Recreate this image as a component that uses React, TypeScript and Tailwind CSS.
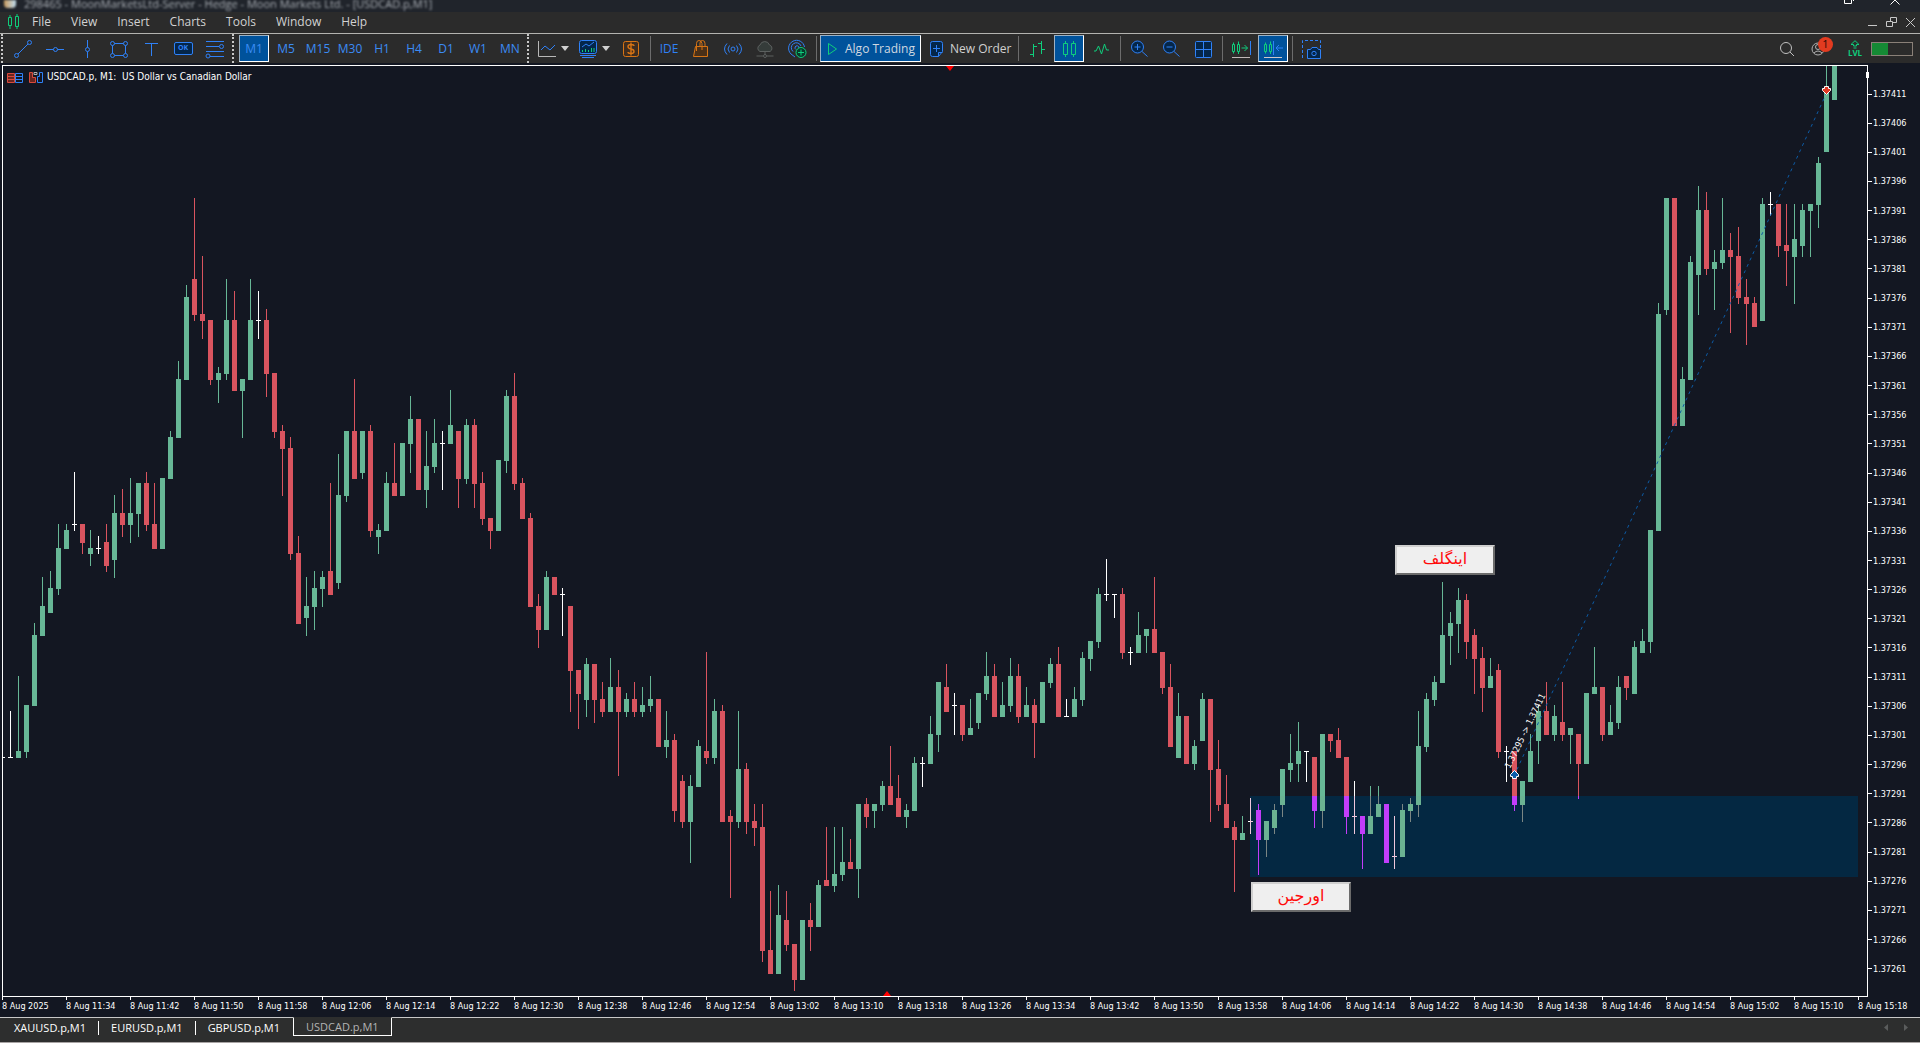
import type { ReactNode } from "react";
import { useState } from "react";
import clsx from "clsx";

// One candle per entry: kind, high, body top, body bottom, low (points above 1.37000).
// G = bullish, R = bearish, W = doji.
const CANDLES = `
W305,297,297,297 G311,298,297,297 G306,306,298,297 G320,318,306,306 G328,323,318,318 G329,326,322,322
G337,333,326,325 G337,336,333,333 W346,337,337,336 R337,337,334,332 G336,333,332,330 W335,333,333,332
R337,334,330,329 G342,339,331,328 R343,339,337,335 G345,339,337,334 G344,344,339,335 R346,344,337,336
R344,337,333,333 G345,345,333,333 G353,352,345,345 G365,362,352,352 G378,376,362,362 R393,379,373,372
R383,373,372,369 R372,372,362,361 G364,363,362,358 G379,372,363,362 R377,372,360,360 G362,362,360,352
G379,372,362,362 W377,372,372,369 R374,372,363,359 R363,363,353,352 R354,353,350,342 R352,350,332,331
R335,332,320,320 G328,323,321,318 G329,326,323,319 G329,328,326,323 R344,329,325,325 G349,342,327,326
G353,353,342,341 R362,353,345,345 G353,353,346,345 R354,353,336,335 G337,336,335,332 G346,344,336,336
R351,344,342,342 G351,351,342,342 G359,355,351,346 R355,355,343,343 G353,347,343,340 G355,351,347,346
W353,351,351,343 G360,354,351,351 R353,353,345,340 G355,354,345,344 R355,354,344,340 R346,344,338,337
R338,338,336,333 G348,348,336,336 G360,359,348,346 R363,359,344,343 R345,344,338,338 R339,338,323,323
R325,323,319,316 G329,328,319,319 R328,328,325,325 W326,325,325,318 R323,323,312,305 R312,312,308,302
G314,313,307,304 R313,313,307,303 R310,307,305,304 G314,309,305,305 R312,309,305,294 G308,307,305,304
R310,307,305,304 G309,306,305,304 G311,307,306,305 R307,307,299,299 G305,300,299,297 R301,300,288,286
R294,293,286,285 G294,292,286,279 G300,299,292,292 R315,298,297,296 G307,305,297,296 R306,305,286,286
R288,287,286,273 G305,295,286,285 R296,295,286,284 R289,286,285,282 R289,285,264,262 R274,264,260,260
G275,270,260,260 R274,269,265,264 R265,265,259,257 G269,269,259,259 R272,269,268,264 G276,275,268,268
R285,276,275,275 G285,277,275,274 G285,279,277,276 R283,279,278,278 G289,289,278,273 R290,289,287,285
G289,289,288,285 G293,292,289,288 R299,292,289,289 R294,290,287,287 G289,288,287,285 G297,296,288,288
W297,296,296,292 G304,301,296,296 G310,310,301,298 R313,309,305,305 W308,306,306,301 R306,306,301,300
G307,302,301,301 G308,308,303,302 G315,311,308,307 R313,311,304,304 G310,306,304,304 G314,311,306,305
R313,311,304,303 G309,306,304,304 R307,306,303,297 G310,310,303,303 G314,313,310,309 R316,313,304,304
W307,304,304,304 G309,307,304,304 G315,314,307,306 G317,317,314,312 G326,325,317,316 W331,325,325,324
W325,325,325,321 R326,325,315,314 W316,315,315,313 G322,318,315,315 G319,319,318,315 R328,319,315,315
R315,315,309,308 R313,309,299,299 G308,304,297,297 R304,304,296,296 G300,299,296,295 G308,307,300,300
R307,307,295,286 R300,295,289,288 R294,289,285,285 R286,285,283,274 G287,284,283,283 W290,286,286,284
R289,288,283,277 G286,286,283,280 G289,288,285,284 G295,295,289,287 G301,296,295,293 G303,298,296,293
W298,298,298,293 R297,297,288,285 G301,301,288,285 R301,301,300,298 R302,300,297,297 R297,297,287,284
W293,287,287,284 R287,287,284,278 G292,287,284,284 G292,289,287,287 R289,289,279,279 W287,280,280,278
G289,288,280,280 G290,289,288,286 G305,299,289,287 G308,307,299,298 G311,310,307,306 G327,318,310,310
G322,320,318,313 G326,324,320,315 R325,324,317,314 R319,318,314,308 R316,314,309,305 G314,311,309,309
R313,312,298,297 W299,298,298,293 R298,298,289,288 G293,293,289,286 G301,298,293,293 G306,305,300,296
R310,305,301,301 G306,304,301,300 R310,303,301,300 G302,302,301,296 R301,301,296,290 G308,308,296,296
G316,309,308,308 R309,309,301,300 G306,303,301,301 G311,309,303,302 R311,311,309,307 G317,316,308,308
G319,317,315,315 G336,336,317,315 G375,373,336,336 G393,393,374,373 R393,393,354,354 G364,362,354,354
G383,382,362,362 G395,391,380,373 R394,391,381,380 G384,382,381,374 G393,384,382,381 R387,384,383,370
R388,383,376,375 R379,376,375,368 R376,375,371,371 G393,392,372,372 W394,392,392,390 R392,392,385,383
R392,385,384,378 G392,386,383,375 G392,391,385,383 G392,392,391,383 G400,399,392,388 G420,412,401,401
G420,420,410,410`
  .trim()
  .split(/\s+/)
  .map((entry) => {
    const [high, top, bottom, low] = entry.slice(1).split(",").map(Number);
    return { kind: entry[0], high, top, bottom, low };
  });

const TIMEFRAMES = ["M1", "M5", "M15", "M30", "H1", "H4", "D1", "W1", "MN"];
const MENUS = ["File", "View", "Insert", "Charts", "Tools", "Window", "Help"];
const TABS = ["XAUUSD.p,M1", "EURUSD.p,M1", "GBPUSD.p,M1", "USDCAD.p,M1"];
const PRICES = Array.from({ length: 31 }, (_, i) => (1.37411 - i * 0.00005).toFixed(5));

const TIMES = Array.from({ length: 30 }, (_, i) => {
  if (i === 0) return "8 Aug 2025";
  const minutes = 11 * 60 + 26 + i * 8;
  return `8 Aug ${Math.floor(minutes / 60)}:${String(minutes % 60).padStart(2, "0")}`;
});

const GREEN = "#67b796";
const RED = "#d9545f";
const BLUE = "#2f81f7";
const LIME = "#0fce7c";

const priceToY = (p: number) => Math.round(27 + (411 - p) * 5.827);

function Candles({ bull, bear, wick, doji }: { bull: string; bear: string; wick: string; doji: string }) {
  return (
    <g shapeRendering="crispEdges">
      {CANDLES.map((c, i) => {
        const x = 5 + i * 8;
        const fill = c.kind === "G" ? bull : c.kind === "R" ? bear : doji;
        const high = priceToY(c.high);
        const top = priceToY(c.top);
        return (
          <g key={i} fill={fill}>
            <rect x={x + 2} y={high} width="1" height={priceToY(c.low) - high + 1} fill={c.kind === "G" ? wick : fill} />
            <rect x={x} y={top} width="5" height={priceToY(c.bottom) - top + 1} />
          </g>
        );
      })}
    </g>
  );
}

function PriceChart() {
  return (
    <svg className="absolute inset-0 h-full w-full" role="img" aria-label="USDCAD.p one minute candles">
      <defs>
        <clipPath id="zone">
          <rect x="1247" y="730" width="608" height="81" />
        </clipPath>
      </defs>
      <Candles bull={GREEN} bear={RED} wick={GREEN} doji="#ffffff" />
      <rect x="0" y={priceToY(297)} width="2" height="1" fill="#fff" />
      <g clipPath="url(#zone)">
        <rect x="1247" y="730" width="608" height="81" fill="#042842" />
        <Candles bull="#6bb292" bear="#c23dfa" wick="#7b8684" doji="#f0c8dc" />
      </g>
      <line x1="1511" y1="710" x2="1824" y2="26" stroke="#0c5ba6" strokeWidth="1" strokeDasharray="3 4" />
      <path d="M1511.500 704.500l4 4v2h-2v2h-4v-2h-2v-2z" fill="#0b5cab" stroke="#fff" />
      <path d="M1823.500 28.500l4-4v-2h-2v-2h-4v2h-2v2z" fill="#e03a24" stroke="#fff" />
      <text
        x="1507"
        y="703"
        transform="rotate(-64 1507 703)"
        fill="#fff"
        className="font-['DejaVu_Sans_Condensed',sans-serif] text-[9px]"
      >
        1.37295 -&gt; 1.37411
      </text>
      <path d="M943 0h8l-4 5z" fill="#f00" />
    </svg>
  );
}

function Icon({ children, size = 20, color = BLUE }: { children: ReactNode; size?: number; color?: string }) {
  return (
    <svg width={size} height={size} viewBox={`0 0 ${size} ${size}`} fill="none" stroke={color} className="shrink-0" aria-hidden="true">
      {children}
    </svg>
  );
}

function ToolButton({ label, active, children }: { label: string; active?: boolean; children: ReactNode }) {
  return (
    <button
      type="button"
      aria-label={label}
      className={clsx(
        "mx-px flex h-[27px] w-[30px] shrink-0 items-center justify-center border",
        active ? "border-t-[#9db1c4] border-r-white border-b-white border-l-[#9db1c4] bg-[#00529b]" : "border-transparent hover:bg-[#3a3a3a]",
      )}
    >
      {children}
    </button>
  );
}

function DropButton({ label, children }: { label: string; children: ReactNode }) {
  return (
    <button type="button" aria-label={label} className="flex h-[27px] w-[41px] shrink-0 items-center gap-1 pl-1">
      {children}
      <svg width="8" height="5" viewBox="0 0 8 5" className="shrink-0" aria-hidden="true">
        <path d="M0 0h8L4 5z" fill="#d0d0d0" />
      </svg>
    </button>
  );
}

const Grip = () => (
  <div className="flex w-[7px] shrink-0 self-stretch pl-px">
    <div className="w-0 border-l-2 border-dotted border-[#c8c8c8]" />
  </div>
);

const Separator = () => (
  <div className="flex h-[25px] w-[6px] shrink-0 justify-center">
    <div className="w-px bg-[#6c6c6c]" />
  </div>
);

function DrawingTools() {
  return (
    <>
      <ToolButton label="Trendline">
        <Icon>
          <circle cx="3.5" cy="16.5" r="2" />
          <circle cx="16.5" cy="3.5" r="2" />
          <path d="M5 15L15 5" />
        </Icon>
      </ToolButton>
      <ToolButton label="Horizontal line">
        <Icon>
          <circle cx="10.5" cy="10.5" r="2" />
          <path d="M1 10.5h7.5M12.5 10.5H19" />
        </Icon>
      </ToolButton>
      <ToolButton label="Vertical line">
        <Icon>
          <circle cx="10.5" cy="10.5" r="2" />
          <path d="M10.5 1v7.5M10.5 12.5V19" />
        </Icon>
      </ToolButton>
      <ToolButton label="Rectangle">
        <Icon>
          <circle cx="3.5" cy="4.5" r="2" />
          <circle cx="16.5" cy="4.5" r="2" />
          <circle cx="3.5" cy="16.5" r="2" />
          <circle cx="16.5" cy="16.5" r="2" />
          <path d="M5.5 4.5h9M5.5 16.5h9M3.5 6.5v8M16.5 6.5v8" />
        </Icon>
      </ToolButton>
      <ToolButton label="Text">
        <Icon>
          <path d="M4 4.5h13M10.5 4.5V17" />
        </Icon>
      </ToolButton>
      <ToolButton label="Button">
        <span className="flex h-[13px] w-[19px] items-center justify-center rounded-xs border border-[#2f81f7] bg-[#04264a] text-[7px] font-bold text-[#2f81f7]">
          OK
        </span>
      </ToolButton>
      <ToolButton label="Fibonacci">
        <Icon>
          <path d="M1 2.5h18M1 7.5h13M1 12.5h18M5 17.5h14" />
          <circle cx="16.5" cy="7.5" r="2" />
          <circle cx="3" cy="17" r="2" />
        </Icon>
      </ToolButton>
    </>
  );
}

function ChartTools() {
  return (
    <>
      <DropButton label="Line studies">
        <Icon>
          <path d="M1.5 2v15.500H19" stroke="#b8b8b8" />
          <path d="M4 11l4-4 5 4 5-5" />
        </Icon>
      </DropButton>
      <DropButton label="Indicators">
        <Icon>
          <rect x="1.500" y="1.500" width="17" height="13" rx="2" fill="#04264a" />
          <path d="M4 8l4-3 3 2 5-4" />
          <path d="M4.500 13v-2M7.500 13v-3M10.500 13v-2M13.500 13V9M16 13V9" stroke={LIME} />
          <path d="M2 16.500h16M4 18.500h12" />
        </Icon>
      </DropButton>
      <ToolButton label="Trading">
        <Icon color="#d87414">
          <rect x="2.500" y="2.500" width="15" height="15" rx="2" fill="#3f2d1f" />
          <path d="M13 7q0-1.500-3-1.500T7 7.500t3 2.500 3 2.500-3 2-3-1.500M10 3.500v13" strokeWidth="1.400" />
        </Icon>
      </ToolButton>
      <Separator />
      <ToolButton label="IDE">
        <span className="text-[12px] text-[#2f81f7]">IDE</span>
      </ToolButton>
      <ToolButton label="Market">
        <Icon color="#d87414">
          <path d="M4.500 7.500h12v10h-14z" fill="#4a3018" />
          <path d="M5.500 12V4.500q0-3 2.500-3t3 3V11M9 7V4q0-2.500 2.500-2.500T14 4.500V8" />
        </Icon>
      </ToolButton>
      <ToolButton label="Signals">
        <Icon>
          <circle cx="10" cy="10" r="2" />
          <path d="M6.500 6.500q-3 3.500 0 7M13.500 6.500q3 3.500 0 7M4 4.500q-5 5.500 0 11M16 4.500q5 5.500 0 11" />
        </Icon>
      </ToolButton>
      <ToolButton label="Virtual hosting">
        <Icon color="#5c605f">
          <path d="M5 12.500a3.500 3.500 0 010-6.500 5 5 0 019.500 0A3.500 3.500 0 0115 12.500z" fill="#353c3a" />
          <path d="M10 12.500v3M1.500 17h6.500M12 17h6.500" />
          <circle cx="10" cy="17" r="1.500" />
        </Icon>
      </ToolButton>
      <ToolButton label="Connections">
        <Icon>
          <path d="M4 15a8 8 0 1113.500-7M6 12.500a5 5 0 118-5.500M9 10.500a2 2 0 113-1.500M4 15l4 3" />
          <circle cx="14" cy="13.500" r="5" fill="#073b2b" stroke={LIME} />
          <path d="M14 10.500v6M11 13.500h6" stroke={LIME} />
        </Icon>
      </ToolButton>
      <Separator />
      <button
        type="button"
        className="mx-px flex h-[27px] w-[101px] shrink-0 items-center gap-1.5 border border-t-[#9db1c4] border-r-white border-b-white border-l-[#9db1c4] bg-[#00529b] pl-1 text-[12px] text-[#d0d8e0]"
      >
        <Icon size={14} color={LIME}>
          <path d="M3.500 1.500l8 5.500-8 5.500z" />
        </Icon>
        <span className="whitespace-nowrap">Algo Trading</span>
      </button>
      <button type="button" className="flex h-[27px] w-[93px] shrink-0 items-center gap-1 pl-1.5 text-[12px] text-[#d0d0d0]">
        <Icon size={18}>
          <path d="M2.500 3.500q0-2 2-2h8q2 0 2 2v8l-4 5h-6q-2 0-2-2z" fill="#04264a" />
          <path d="M8.500 5v7M5 8.500h7M10.500 16.500v-4h4" />
        </Icon>
        <span className="whitespace-nowrap">New Order</span>
      </button>
      <Separator />
      <ToolButton label="Bar chart">
        <Icon color={LIME}>
          <path d="M6.500 5v13M3 15.500h3.500M6.500 7.500H10M14.500 2v13M11 4.500h3.500M14.500 10.500H18" />
        </Icon>
      </ToolButton>
      <ToolButton label="Candlesticks" active>
        <Icon color={LIME}>
          <path d="M4.500 4.500h4v11h-4zM12.500 4.500h4v11h-4zM6.500 2v2.500M6.500 15.500V18M14.500 2v2.500M14.500 15.500V18" />
        </Icon>
      </ToolButton>
      <ToolButton label="Line chart">
        <Icon color={LIME}>
          <path d="M3 12h2l2.500-5 3 8 3-10 2 6H18" />
        </Icon>
      </ToolButton>
      <Separator />
      <ToolButton label="Zoom in">
        <Icon>
          <circle cx="8.500" cy="8" r="6" fill="#04264a" />
          <path d="M8.500 5v6M5.500 8h6M13 12.500l5.500 5" />
        </Icon>
      </ToolButton>
      <ToolButton label="Zoom out">
        <Icon>
          <circle cx="8.500" cy="8" r="6" fill="#04264a" />
          <path d="M5.500 8h6M13 12.500l5.500 5" />
        </Icon>
      </ToolButton>
      <ToolButton label="Tile windows">
        <Icon>
          <rect x="2.500" y="2.500" width="16" height="16" rx="1" fill="#04264a" />
          <path d="M10.500 2.500v16M2.500 10.500h16" />
        </Icon>
      </ToolButton>
      <Separator />
      <ToolButton label="Auto scroll">
        <Icon color={LIME}>
          <path d="M1.500 5.500h2v7h-2zM6.500 5.500h2v7h-2zM2.500 3.500v2M2.500 12.500v2M7.500 2.500v3M7.500 12.500v2.500M10.500 9h6M13.500 6l3 3-3 3" />
          <path d="M19.500 2v14" stroke={BLUE} />
          <path d="M1 18.500h18" stroke="#c0b8b8" />
        </Icon>
      </ToolButton>
      <ToolButton label="Chart shift" active>
        <Icon color={LIME}>
          <path d="M1.500 5.500h2v7h-2zM6.500 5.500h2v7h-2zM2.500 3.500v2M2.500 12.500v2M7.500 2.500v3M7.500 12.500v2.500" />
          <path d="M10.500 2v14M13 9h7M16 6l-3 3 3 3" stroke={BLUE} />
          <path d="M1 18.500h18" stroke="#d0c8c8" />
        </Icon>
      </ToolButton>
      <Separator />
      <ToolButton label="Screenshot">
        <Icon>
          <path d="M1.500 19V1.500h18V9" strokeDasharray="3 2" />
          <path d="M6.500 10.500h3l1.500-2h5l1.500 2h2v9h-13z" fill="#04264a" />
          <circle cx="13" cy="14.500" r="2.200" />
        </Icon>
      </ToolButton>
    </>
  );
}

function AccountTools() {
  return (
    <div className="ml-auto flex shrink-0 items-center pr-[7px]">
      <ToolButton label="Search">
        <Icon color="#c0c0c0">
          <circle cx="9" cy="9" r="5.500" />
          <path d="M13 13l4 4" />
        </Icon>
      </ToolButton>
      <div className="relative flex">
        <ToolButton label="Account">
          <Icon color="#b0b0b0">
            <circle cx="9" cy="10" r="6" />
            <circle cx="9" cy="8" r="2.500" />
            <path d="M5 14q4-4 8 0" />
          </Icon>
        </ToolButton>
        <span className="absolute top-0.5 right-0.5 flex h-[15px] w-[15px] items-center justify-center rounded-full bg-[#e23b20] text-[11px] text-[#2a0a04]">
          1
        </span>
      </div>
      <button type="button" className="ml-1 flex w-8 flex-col items-center text-[8px] leading-[8px] font-bold text-[#0fce7c]">
        <svg width="10" height="9" viewBox="0 0 10 9" fill="none" stroke={LIME} aria-hidden="true">
          <path d="M5 .7l4 3.800H6.500V6h-3V4.500H1zM3.500 8h3" />
        </svg>
        LVL
      </button>
      <div role="progressbar" aria-label="Level" aria-valuenow={40} className="h-3.5 w-[42px] border border-[#8a8078]">
        <div className="h-full w-2/5 bg-[#158a35]" />
      </div>
    </div>
  );
}

function NoteLabel({ children, className }: { children: string; className: string }) {
  return (
    <div
      dir="rtl"
      className={clsx(
        "absolute flex h-[30px] w-[100px] items-center justify-center border-2 border-t-[#cfcfcf] border-r-[#6b6b6b] border-b-[#6b6b6b] border-l-[#cfcfcf] bg-[#efefef] pb-0.5 font-['DejaVu_Sans',sans-serif] text-[16px] text-[#ff0a0a]",
        className,
      )}
    >
      {children}
    </div>
  );
}

export default function App() {
  const [timeframe, setTimeframe] = useState("M1");
  const [tab, setTab] = useState("USDCAD.p,M1");

  return (
    <div className="flex h-screen flex-col overflow-hidden bg-[#131722] font-['Open_Sans','Noto_Sans',sans-serif]">
      <header className="bg-[#2b2b2b]">
        <div className="flex h-3 items-start justify-between bg-[#20242b]">
          <div className="flex items-start gap-2 pl-1 blur-[1px]">
            <span className="h-2 w-3 rounded-b bg-gradient-to-r from-[#c79a5c] to-[#bcdcf0]" />
            <span className="text-[11px] leading-[7px] whitespace-pre text-[#a8adb3]">
              298465 - MoonMarketsLtd-Server - Hedge - Moon Markets Ltd. - [USDCAD.p,M1]
            </span>
          </div>
          <div className="flex gap-9 pr-5">
            <svg width="10" height="5" viewBox="0 0 10 5" fill="none" stroke="#fff" aria-hidden="true">
              <path d="M.5 0v3.500h7V0M9.500 0v1" />
            </svg>
            <svg width="10" height="5" viewBox="0 0 10 5" fill="none" stroke="#fff" aria-hidden="true">
              <path d="M.5 4.500l4.500-4.500 4.500 4.500" />
            </svg>
          </div>
        </div>

        <nav className="flex h-[22px] items-center border-b border-[#b3b3b0] pr-1 pb-px pl-1 text-[12px] text-[#d2d2d2]">
          <Icon size={20} color={LIME}>
            <path d="M4.500 5.500h3v8h-3zM11.500 4.500h3v10h-3zM6 3v2.500M6 13.500V17M13 2v2.500M13 14.500V17" />
          </Icon>
          {MENUS.map((menu) => (
            <button key={menu} type="button" className="px-[10px] first-of-type:pl-2">
              {menu}
            </button>
          ))}
          <div className="ml-auto flex items-center gap-2 text-[#c8c8c8]">
            <Icon size={11} color="#c8c8c8">
              <path d="M1 8.500h9" />
            </Icon>
            <Icon size={11} color="#c8c8c8">
              <path d="M4.500 4V.5h6v5H7M.5 4.500h6v5h-6z" />
            </Icon>
            <Icon size={11} color="#c8c8c8">
              <path d="M1 1l9 9M10 1l-9 9" />
            </Icon>
          </div>
        </nav>

        <div className="flex h-[29px] items-center">
          <Grip />
          <DrawingTools />
          <Grip />
          {TIMEFRAMES.map((tf) => (
            <button
              key={tf}
              type="button"
              onClick={() => setTimeframe(tf)}
              className={clsx(
                "mx-px flex h-[27px] w-[30px] shrink-0 items-center justify-center border text-[12px] text-[#3b8cf5]",
                tf === timeframe
                  ? "border-t-[#9db1c4] border-r-white border-b-white border-l-[#9db1c4] bg-[#00529b]"
                  : "border-transparent",
              )}
            >
              {tf}
            </button>
          ))}
          <Grip />
          <ChartTools />
          <AccountTools />
        </div>
      </header>

      <main className="flex min-h-0 flex-1 flex-col pt-0.5 pl-0.5 font-['DejaVu_Sans_Condensed',sans-serif] text-white">
        <div className="flex min-h-0 flex-1">
          <section className="relative min-w-0 flex-1 border border-white">
            <PriceChart />
            <h1 className="relative flex items-center gap-1 pt-[3px] pl-1 text-[10px] leading-4">
              <Icon size={16}>
                <path d="M.5 4.500h7v9h-7zM.5 7.500h7M.5 10.500h7" stroke="#d84a3c" fill="#6b2620" />
                <path d="M8.500 4.500h7v9h-7zM8.500 7.500h7M8.500 10.500h7" />
              </Icon>
              <Icon size={16}>
                <path d="M2.500 3.500h3v5h3v5h-6z" stroke="#d84a3c" fill="#6b2620" />
                <path d="M10.500 13.500v-6h2v-4h3v10z" />
                <path d="M7 3.500h3v2H7z" stroke="#b0b0b0" />
              </Icon>
              <span className="whitespace-pre">USDCAD.p, M1:  US Dollar vs Canadian Dollar</span>
            </h1>
            <NoteLabel className="top-[479px] left-[1392px]">اینگلف</NoteLabel>
            <NoteLabel className="top-[816px] left-[1248px]">اورجین</NoteLabel>
            <span className="absolute top-1.5 -right-0.5 h-1.5 w-[3px] bg-white" />
            <svg width="8" height="5" viewBox="0 0 8 5" className="absolute bottom-0 left-[880px]" aria-hidden="true">
              <path d="M0 5h8L4 0z" fill="#f00" />
            </svg>
          </section>
          <ol className="flex w-[52px] shrink-0 flex-col justify-between pt-[22px] pb-[21px] text-[9px] leading-[14px]">
            {PRICES.map((price) => (
              <li key={price} className="flex items-center gap-px">
                <span className="h-px w-1 bg-white" />
                {price}
              </li>
            ))}
          </ol>
        </div>
        <ol className="flex h-5 shrink-0 overflow-hidden text-[9px]">
          {TIMES.map((time) => (
            <li key={time} className="w-16 shrink-0 whitespace-nowrap">
              <div className="h-[3px] w-px bg-white" />
              <div className="leading-3">{time}</div>
            </li>
          ))}
        </ol>
      </main>

      <footer className="flex h-[26px] shrink-0 items-start border-t border-b border-t-[#c8c8c8] border-b-[#a8a4a4] bg-[#2d2e2e] pl-0.5 text-[11px]">
        {TABS.map((name) => (
          <button
            key={name}
            type="button"
            onClick={() => setTab(name)}
            className={clsx(
              "px-3",
              name === tab
                ? "-mt-px h-[19px] border border-t-[#2d2e2e] border-r-white border-b-white border-l-white leading-[17px] text-[#b4b4b4]"
                : "mt-[3px] h-3.5 border-r border-white leading-[14px] text-white [&:nth-child(3)]:border-transparent",
            )}
          >
            {name}
          </button>
        ))}
        <div className="ml-auto flex items-center gap-4 pt-1.5 pr-3">
          <svg width="4" height="7" viewBox="0 0 4 7" aria-hidden="true">
            <path d="M4 0v7L0 3.500z" fill="#5a5c5c" />
          </svg>
          <svg width="4" height="7" viewBox="0 0 4 7" aria-hidden="true">
            <path d="M0 0v7l4-3.500z" fill="#5a5c5c" />
          </svg>
        </div>
      </footer>
    </div>
  );
}
